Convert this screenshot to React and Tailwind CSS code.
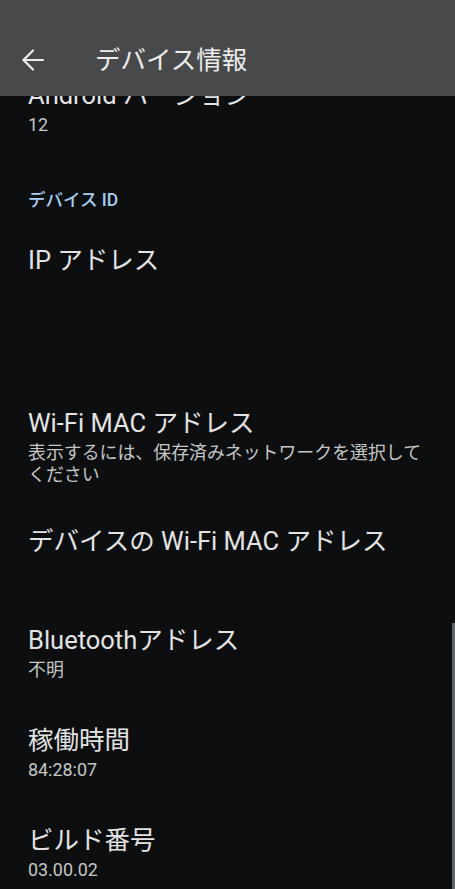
import React from 'react';

const font = { fontFamily: 'Roboto, "Noto Sans CJK JP", sans-serif' };

const Pref = ({ title, summary, className = '' }) => (
  <div className={`px-7 ${className}`}>
    <div className="text-[25.5px] leading-[32px] text-[#e3e3e3]">{title}</div>
    {summary && (
      <div className="mt-[3px] text-[17.9px] leading-[22px] text-[#c4c7c5]">{summary}</div>
    )}
  </div>
);

const BackArrow = () => (
  <svg width="24" height="24" viewBox="0 0 24 24" fill="none" stroke="#ececec" strokeWidth="2.2" strokeLinecap="round" strokeLinejoin="round">
    <path d="M2.5 12H22" />
    <path d="M12 2.5 2.5 12 12 21.5" />
  </svg>
);

export default function App() {
  return (
    <div className="relative w-[455px] h-[889px] overflow-hidden bg-[#0d0e10]" style={font}>
      {/* toolbar */}
      <header className="relative z-10 h-[96px] bg-[#48494b] pt-6 flex items-center">
        <div className="ml-[21px]">
          <BackArrow />
        </div>
        <h1 className="ml-[50px] text-[25.5px] leading-[32px] text-[#ececec] font-normal">デバイス情報</h1>
      </header>

      {/* list, scrolled so the first row sits under the toolbar */}
      <div className="-mt-[38px]">
        <Pref title="Android バージョン" summary="12" className="h-[100px] pt-[21px]" />

        <div className="px-7 pt-[32px] text-[17.5px] leading-[20px] font-medium text-[#a8cdf0]">デバイス ID</div>

        <Pref title="IP アドレス" className="h-[175px] pt-[34px]" />

        <Pref
          title="Wi-Fi MAC アドレス"
          summary="表示するには、保存済みネットワークを選択してください"
          className="h-[121px] pt-[22px] pr-[30px]"
        />

        <Pref title="デバイスの Wi-Fi MAC アドレス" className="h-[97px] pt-[19px]" />

        <Pref title="Bluetoothアドレス" summary="不明" className="h-[100px] pt-[21px]" />

        <Pref title="稼働時間" summary="84:28:07" className="h-[100px] pt-[21px]" />

        <Pref title="ビルド番号" summary="03.00.02" className="h-[100px] pt-[21px]" />
      </div>

      {/* scroll indicator */}
      <div className="absolute right-0 top-[623px] bottom-0 w-[3px] bg-[#606468]" />
    </div>
  );
}
